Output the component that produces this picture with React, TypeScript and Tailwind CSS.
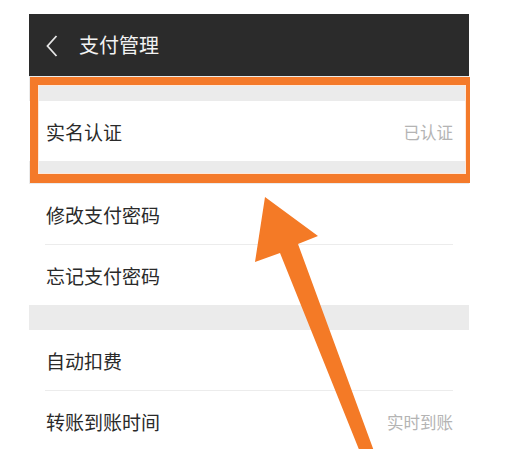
export default function App() {
  const font = "font-['Noto_Sans_CJK_SC','Noto_Sans',sans-serif]";

  return (
    <div className={`relative w-[532px] h-[449px] overflow-hidden bg-white pt-[14px] ${font}`}>
      <div className="ml-[29px] w-[440px] flex flex-col">
        {/* top bar */}
        <div className="h-[62px] bg-[#2b2b2b] flex items-center pl-[17px]">
          <svg width="12" height="22" viewBox="0 0 12 22" className="mr-[21px] mt-[1px]">
            <polyline points="10.5,1 1.5,11 10.5,21" fill="none" stroke="#e6e6e6" strokeWidth="1.8" />
          </svg>
          <span className="text-[20px] leading-none text-[#f2f2f2]">支付管理</span>
        </div>

        <div className="h-[25px] bg-[#ebebeb]" />
        <Row label="实名认证" value="已认证" />
        <div className="h-[23px] bg-[#ebebeb]" />

        <Row label="修改支付密码" />
        <Divider />
        <Row label="忘记支付密码" />

        <div className="h-[25px] bg-[#ebebeb]" />
        <Row label="自动扣费" />
        <Divider />
        <Row label="转账到账时间" value="实时到账" />
      </div>

      {/* highlight box */}
      <div className="absolute left-[30px] top-[77px] w-[440px] h-[106px] border-[#f47a2a] border-l-8 border-t-8 border-b-[9px] border-r-4">
        <div className="w-full h-full border border-[#fde9dc]" />
      </div>

      {/* arrow */}
      <svg className="absolute left-0 top-0" width="532" height="449" viewBox="0 0 532 449">
        <polygon
          points="265,197 318,236 298,244 378,462 364,462 280,253 255,262"
          fill="#f47a26"
        />
      </svg>
    </div>
  );
}

function Row({ label, value }: { label: string; value?: string }) {
  return (
    <div className="h-[60px] bg-white flex items-center justify-between pl-[17px] pr-[16px]">
      <span className="text-[19px] text-[#2a2a2a] pt-[3px]">{label}</span>
      {value && <span className="text-[16.5px] text-[#b4b4b4] pt-[3px]">{value}</span>}
    </div>
  );
}

function Divider() {
  return (
    <div className="bg-white px-[16px]">
      <div className="h-px bg-[#ececec]" />
    </div>
  );
}
